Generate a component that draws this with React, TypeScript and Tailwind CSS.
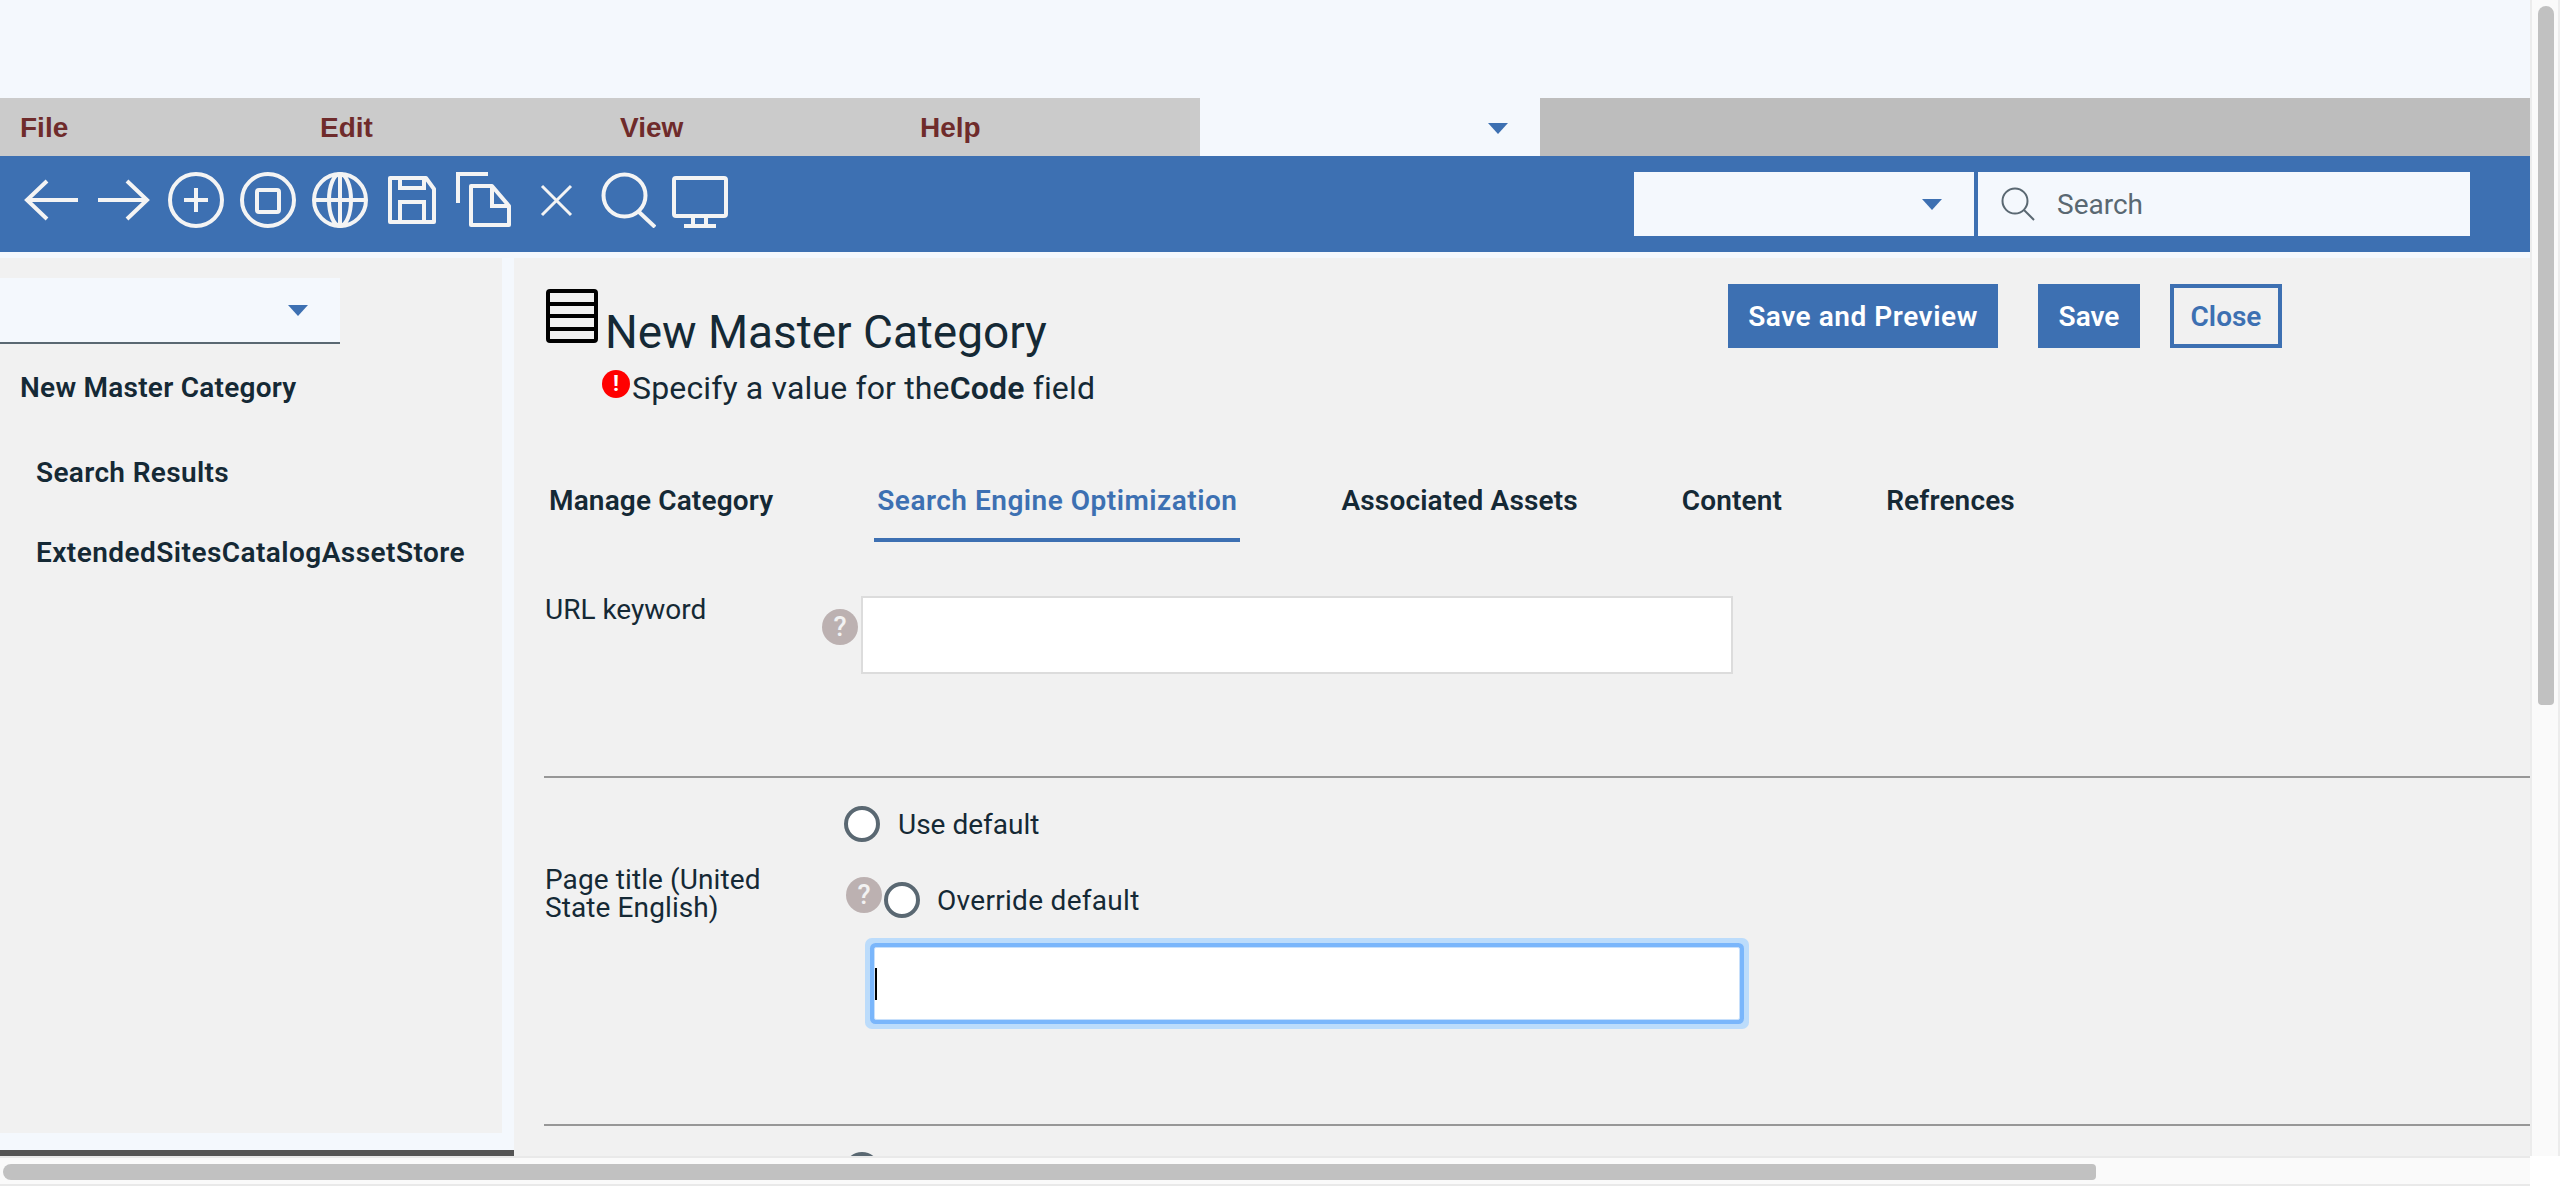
import React from 'react';

const MenuItem: React.FC<{ label: string }> = ({ label }) => (
  <span className="w-[300px] pl-5 pt-[14px] font-['Liberation_Sans',sans-serif] text-[28px] leading-[32px] font-bold text-[#6f2b2b]">
    {label}
  </span>
);

const Caret: React.FC = () => (
  <span className="h-0 w-0 border-x-[10px] border-t-[11px] border-x-transparent border-t-[#3d70b2]" />
);

const ToolIcon: React.FC<{ children: React.ReactNode }> = ({ children }) => (
  <svg
    width="56"
    height="56"
    viewBox="0 0 56 56"
    fill="none"
    stroke="#f4f4f4"
    strokeWidth="4"
    className="shrink-0"
  >
    {children}
  </svg>
);

const HelpIcon: React.FC = () => (
  <span className="flex h-9 w-9 shrink-0 items-center justify-center rounded-full bg-[#bcb1b1] text-[27px] leading-none font-medium text-[#f2f2f2]">
    ?
  </span>
);

const Radio: React.FC = () => (
  <span className="block h-9 w-9 shrink-0 rounded-full border-4 border-[#5a6872] bg-white" />
);

const Toolbar: React.FC = () => (
  <div className="flex h-[96px] justify-between bg-[#3d70b2] pt-4 pr-[60px] pl-6">
    <div className="flex gap-4">
      <ToolIcon>
        <path d="M23 9 3 28l20 19M3 28h51" />
      </ToolIcon>
      <ToolIcon>
        <path d="M2 28h49M31 9l20 19-20 19" />
      </ToolIcon>
      <ToolIcon>
        <circle cx="28" cy="28" r="26" />
        <path d="M28 16v24M16 28h24" />
      </ToolIcon>
      <ToolIcon>
        <circle cx="28" cy="28" r="26" />
        <rect x="17" y="18" width="22" height="22" rx="2" />
      </ToolIcon>
      <ToolIcon>
        <circle cx="28" cy="28" r="26" />
        <ellipse cx="28" cy="28" rx="11" ry="26" />
        <path d="M28 2v52M2 28h52" />
      </ToolIcon>
      <ToolIcon>
        <path d="M6 6h36l8 11v33H6Z" strokeLinejoin="round" />
        <path d="M16 6v10h24V6M16 50V30h24v20" />
      </ToolIcon>
      <ToolIcon>
        <path d="M2 31V2h30" />
        <path d="M15 14h21l17 20v19H15Z" strokeLinejoin="round" />
        <path d="M36 14v20h17" />
      </ToolIcon>
      <ToolIcon>
        <path d="m14 14 29 29M43 14 14 43" strokeWidth="3" />
      </ToolIcon>
      <ToolIcon>
        <circle cx="24.5" cy="23.5" r="21" />
        <path d="m39 40 16 15" />
      </ToolIcon>
      <ToolIcon>
        <rect x="2" y="6" width="52" height="38" rx="2" />
        <path d="M21 44v10M34 44v10M12 54h32" />
      </ToolIcon>
    </div>
    <div className="flex h-16 gap-1">
      <div className="flex w-[340px] items-center justify-end bg-[#f4f8fd] pr-[32px]">
        <Caret />
      </div>
      <div className="flex w-[492px] items-center gap-[22px] bg-[#f4f8fd] pl-[23px]">
        <svg width="34" height="34" viewBox="0 0 34 34" fill="none" stroke="#5a6872" strokeWidth="2">
          <circle cx="14" cy="14" r="12.5" />
          <path d="m23 23 10 10" />
        </svg>
        <span className="pt-[2px] text-[28px] leading-9 text-[#5a6872]">Search</span>
      </div>
    </div>
  </div>
);

const Sidebar: React.FC = () => (
  <div className="flex w-[514px] shrink-0 flex-col">
    <div className="flex-1 border-r-[12px] border-[#f4f8fd] bg-[#f1f1f1] pt-5 font-semibold text-[#152935]">
      <div className="flex h-[66px] w-[340px] items-center justify-end border-b-2 border-[#5a6872] bg-[#f4f8fd] pr-8">
        <Caret />
      </div>
      <p className="mt-[26px] pl-5 text-[28px] leading-9 tracking-[0.25px]">New Master Category</p>
      <p className="mt-[49px] pl-[36px] text-[28px] leading-9 tracking-[0.35px]">Search Results</p>
      <p className="mt-[44px] pl-[36px] text-[28px] leading-9 tracking-[0.45px]">ExtendedSitesCatalogAssetStore</p>
    </div>
    <div className="h-[17px] bg-[#f4f8fd]" />
    <div className="h-[6px] bg-[#555555]" />
  </div>
);

const Tab: React.FC<{ label: string; active?: boolean }> = ({ label, active }) => (
  <span
    className={
      active
        ? 'border-b-4 border-[#3d70b2] px-[3px] pt-[1px] pb-[19px] text-[28px] leading-9 font-semibold tracking-[0.5px] text-[#3d70b2]'
        : 'border-b-4 border-transparent px-[3px] pt-[1px] pb-[19px] text-[28px] leading-9 font-semibold tracking-[0.15px] text-[#152935]'
    }
  >
    {label}
  </span>
);

const Content: React.FC = () => (
  <div className="min-w-0 flex-1 overflow-hidden bg-[#f1f1f1] pl-[30px] text-[#152935]">
    <div className="flex h-[224px] justify-between pt-[26px] pr-[248px]">
      <div className="flex items-start">
        <svg width="54" height="54" viewBox="0 0 54 54" fill="none" stroke="#000" strokeWidth="4" className="mt-[5px] ml-[1px] shrink-0">
          <rect x="3" y="2" width="48" height="50" rx="2" />
          <path d="M3 15h48M3 27h48M3 40h48" />
        </svg>
        <div className="pt-[22px] pl-[6px]">
          <h1 className="text-[46px] leading-[52px] font-normal tracking-[-0.05px]">New Master Category</h1>
          <div className="mt-[8px] -ml-[3px] flex items-start">
            <span className="mt-[4px] flex h-7 w-7 items-center justify-center rounded-full bg-[#ff0000] text-[22px] leading-none font-bold text-white">
              !
            </span>
            <p className="pl-[2px] text-[32px] leading-[44px] tracking-[0.15px]">
              Specify a value for the<b className="font-semibold">Code</b> field
            </p>
          </div>
        </div>
      </div>
      <div className="flex h-16 items-stretch">
        <button className="w-[270px] bg-[#3d70b2] pt-[2px] text-[28px] font-semibold tracking-[0.55px] text-white">Save and Preview</button>
        <button className="ml-10 w-[102px] bg-[#3d70b2] pt-[2px] text-[28px] font-semibold text-white">Save</button>
        <button className="ml-[30px] w-[112px] border-4 border-[#3d70b2] pt-[2px] text-[28px] font-semibold text-[#3d70b2]">Close</button>
      </div>
    </div>

    <div className="flex items-start gap-[98px] pl-[2px]">
      <Tab label="Manage Category" />
      <Tab label="Search Engine Optimization" active />
      <Tab label="Associated Assets" />
      <Tab label="Content" />
      <Tab label="Refrences" />
    </div>

    <div className="mt-[54px] flex items-start">
      <p className="w-[278px] pl-[1px] text-[28px] leading-7">URL keyword</p>
      <div className="mt-[13px]">
        <HelpIcon />
      </div>
      <div className="ml-[3px] h-[78px] w-[872px] border-2 border-[#dcdcdc] bg-white" />
    </div>

    <div className="mt-[102px] border-t-2 border-[#979797]" />

    <div className="flex items-start">
      <p className="mt-[88px] w-[300px] pl-[1px] text-[28px] leading-7 tracking-[0.1px]">
        Page title (United
        <br />
        State English)
      </p>
      <div className="pt-7">
        <div className="flex items-center gap-[18px]">
          <Radio />
          <span className="h-9 text-[28px] leading-[37px]">Use default</span>
        </div>
        <div className="mt-[40px] flex items-start pl-[2px]">
          <div className="-mt-[5px] mr-[2px]">
            <HelpIcon />
          </div>
          <Radio />
          <span className="ml-[17px] h-9 text-[28px] leading-[37px] tracking-[0.3px]">Override default</span>
        </div>
        <div className="mt-[29px] ml-[30px] flex h-[73px] w-[866px] items-center rounded-[2px] border border-[#c8e0fb] bg-white shadow-[0_0_0_4px_#7ab6fb,0_0_0_9px_#bcdcfb]">
          <span className="h-8 w-[2px] bg-black" />
        </div>
      </div>
    </div>

    <div className="mt-[104px] border-t-2 border-[#979797]" />
    <div className="mt-[26px] ml-[300px]">
      <Radio />
    </div>
  </div>
);

export default function App() {
  return (
    <div className="flex h-[1186px] w-[2560px] flex-col overflow-hidden bg-white font-['Roboto',sans-serif]">
      <div className="flex min-h-0 flex-1">
        <div className="flex w-[2530px] flex-col">
          <div className="h-[98px] bg-[#f4f8fd]" />
          <div className="flex h-[58px]">
            <div className="flex w-[1200px] bg-[#cbcbcb]">
              <MenuItem label="File" />
              <MenuItem label="Edit" />
              <MenuItem label="View" />
              <MenuItem label="Help" />
            </div>
            <div className="flex w-[340px] items-center justify-end bg-[#f4f8fd] pt-[2px] pr-[32px]">
              <Caret />
            </div>
            <div className="flex-1 bg-[#bdbdbd]" />
          </div>
          <Toolbar />
          <div className="h-[6px] bg-[#f4f8fd]" />
          <div className="flex min-h-0 flex-1">
            <Sidebar />
            <Content />
          </div>
        </div>
        {/* vertical scrollbar */}
        <div className="w-[30px] border-x-2 border-[#ececec] bg-[#fafafa] pt-[6px] pl-[6px]">
          <div className="h-[699px] w-4 rounded-t-lg rounded-b-sm bg-[#c1c1c1]" />
        </div>
      </div>
      {/* horizontal scrollbar */}
      <div className="flex h-[30px]">
        <div className="w-[2530px] border-y-2 border-[#e9e9e9] bg-[#fafafa] pt-[6px] pl-[3px]">
          <div className="h-4 w-[2093px] rounded-l-lg rounded-r-sm bg-[#c1c1c1]" />
        </div>
        <div className="flex-1 bg-white" />
      </div>
    </div>
  );
}
